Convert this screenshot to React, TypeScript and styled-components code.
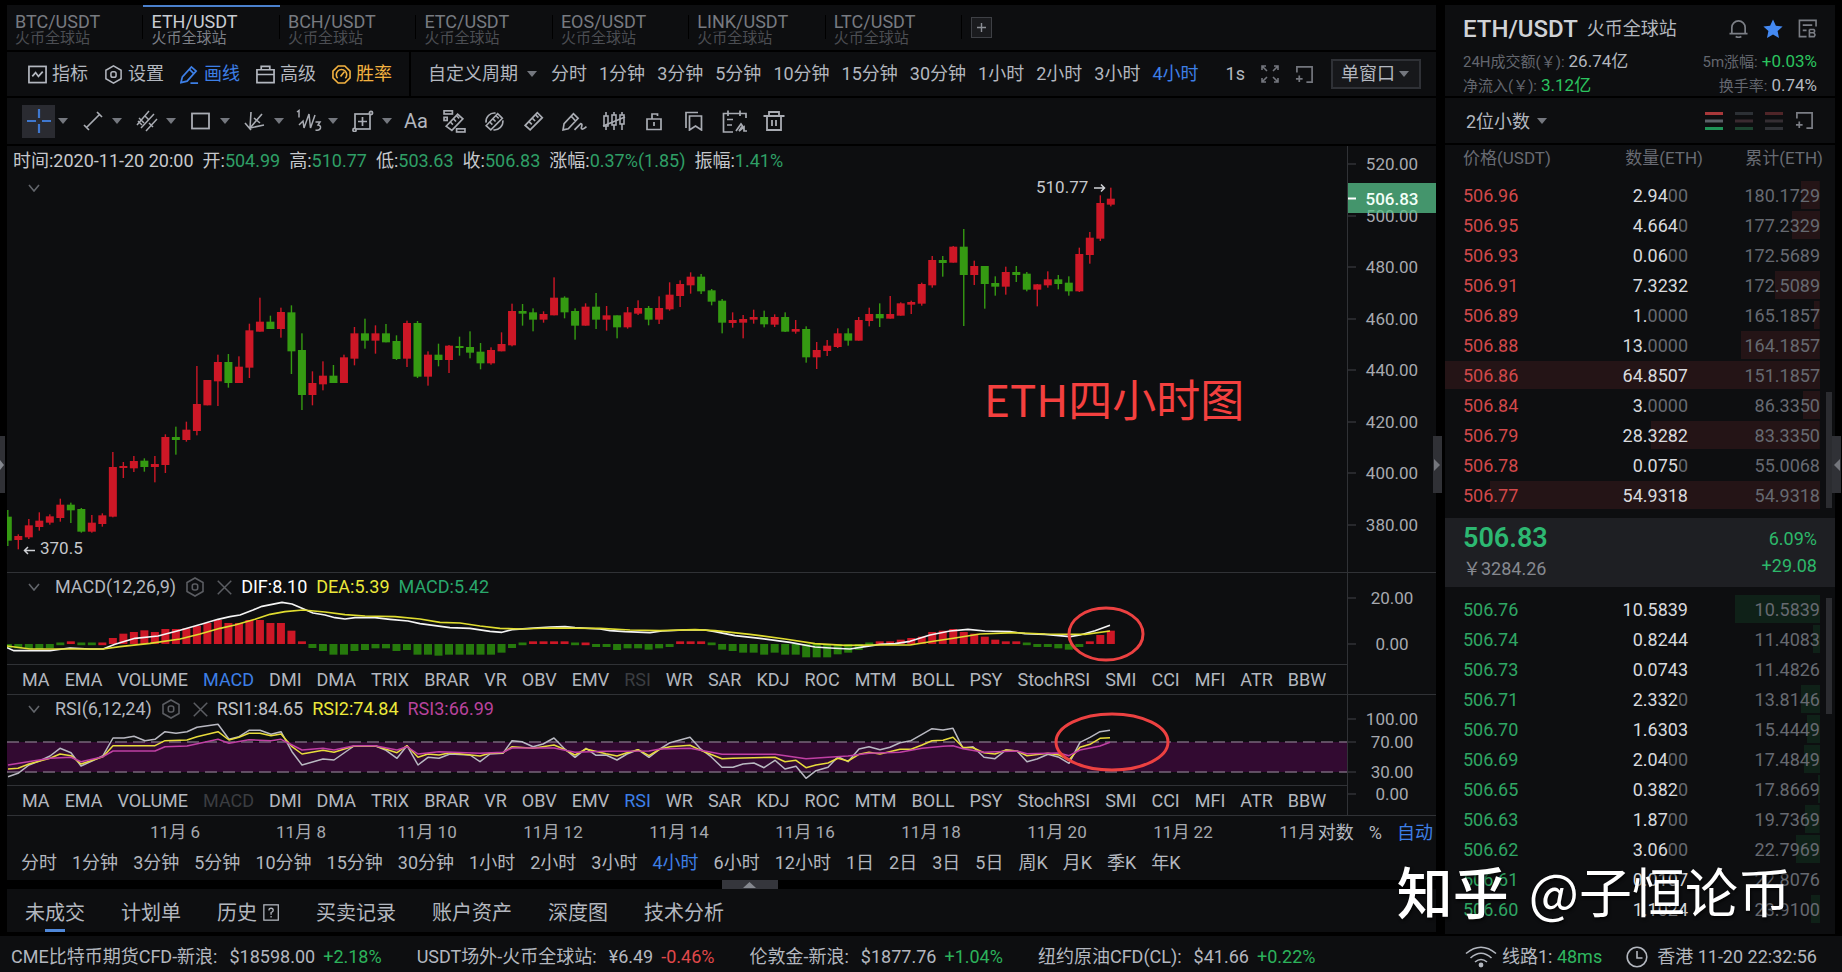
import React from "react";
import styled, { createGlobalStyle } from "styled-components";

const Global = createGlobalStyle`
  * { box-sizing: border-box; }
  body { margin: 0; background: #000; }
  body, button, select { font-family: Roboto, "Noto Sans CJK SC", sans-serif; font-size: 18px; line-height: 24px; color: #b3b7bf; }
  button { background: none; border: 0; padding: 0; cursor: pointer; white-space: nowrap; }
`;

const PANEL = "#0d0e10";
const LINE = "#303236";
const RED = "#cd1726";
const GREEN = "#359a12";
const BLUE = "#3d7fe6";

/* ---------- page frame ---------- */

const Page = styled.div`
  position: relative;
  min-height: 100vh;
  display: flex;
  flex-direction: column;
  padding-top: 5px;
  overflow: hidden;
`;
const Workspace = styled.div`
  flex: 1;
  display: grid;
  grid-template-columns: minmax(0, 1fr) 390px;
  gap: 9px;
  padding: 0 7px 2px;
`;
const Column = styled.div`
  display: flex;
  flex-direction: column;
  min-width: 0;
  gap: 2px;
`;

/* ---------- pair tabs ---------- */

const PairTabs = styled.nav`
  display: flex;
  height: 45px;
  background: ${PANEL};
`;
const PairTab = styled.button<{ $on?: boolean }>`
  flex: 0 0 9.55%;
  display: flex;
  flex-direction: column;
  align-items: flex-start;
  padding: 6px 0 0 8px;
  border-top: 2px solid ${(p) => (p.$on ? "#4a80cc" : "transparent")};
  color: ${(p) => (p.$on ? "#c9ccd2" : "#777a80")};
  background: linear-gradient(#000, #000) right 8px / 1px 24px no-repeat;
  line-height: 18px;
`;
const PairName = styled.span`
  display: block;
`;
const PairVenue = styled.span<{ $on?: boolean }>`
  display: block;
  font-size: 15px;
  line-height: 14px;
  color: ${(p) => (p.$on ? "#7c7f86" : "#4b4d52")};
`;
const AddTab = styled.button`
  width: 21px;
  height: 21px;
  margin: 12px 0 0 9px;
  border: 1px solid #3e4045;
  background: #1a1b1e;
  color: #8b8e95;
  display: grid;
  place-items: center;
`;

/* ---------- tool bars ---------- */

const Bar = styled.div<{ $h: number }>`
  display: flex;
  align-items: center;
  height: ${(p) => p.$h}px;
  background: ${PANEL};
`;
const MainActions = styled.div`
  display: flex;
  align-items: center;
  align-self: stretch;
  gap: 16px;
  padding: 0 17px 0 21px;
  border-right: 2px solid #000;
`;
const Action = styled.button<{ $c?: string }>`
  display: flex;
  align-items: center;
  gap: 5px;
  color: ${(p) => p.$c || "#b3b7bf"};
`;
const Periods = styled.div<{ $gap: number }>`
  display: flex;
  gap: ${(p) => p.$gap}px;
`;
const TextButton = styled.button<{ $on?: boolean; $off?: boolean }>`
  color: ${(p) => (p.$on ? BLUE : p.$off ? "#3b3d41" : "#b3b7bf")};
`;
const Picker = styled.label`
  display: flex;
  align-items: center;
  gap: 9px;
`;
const BareSelect = styled.select`
  appearance: none;
  background: transparent;
  border: 0;
  padding: 0;
  outline: 0;
`;
const PeriodPicker = styled(Picker)`
  margin: 0 14px 0 17px;
`;
const BarEnd = styled.div`
  margin-left: auto;
  display: flex;
  align-items: center;
  gap: 15px;
  padding-right: 15px;
  color: #73767d;
`;
const Refresh = styled.button``;
const WindowPicker = styled(Picker)`
  height: 30px;
  padding: 0 10px 0 8px;
  gap: 4px;
  border: 2px solid #2f3136;
  background: #17181b;
  margin-left: 2px;
`;
const DrawTools = styled.div`
  display: flex;
  align-items: center;
  padding-left: 15px;
`;
const DrawTool = styled.div`
  display: flex;
  align-items: center;
  width: 54px;
`;
const ToolIcon = styled.button<{ $on?: boolean }>`
  width: 33px;
  height: 33px;
  display: grid;
  place-items: center;
  color: ${(p) => (p.$on ? "#3f78cf" : "#a9acb3")};
  background: ${(p) => (p.$on ? "#2a2b31" : "none")};
`;
const ToolMore = styled.button`
  width: 15px;
  display: grid;
  place-items: center;
`;
const SingleTools = styled.div`
  display: flex;
  gap: 7px;
  margin-left: 10px;
`;
const TextTool = styled.button`
  font-size: 20px;
  margin-left: 4px;
`;

/* ---------- chart ---------- */

const ChartPanel = styled.section`
  flex: 1;
  background: ${PANEL};
`;
const Section = styled.div`
  display: grid;
  grid-template-columns: minmax(0, 1fr) 89px;
  border-bottom: 1px solid ${LINE};
`;
const Plot = styled.div`
  position: relative;
`;
const Canvas = styled.svg`
  display: block;
  width: 100%;
`;
const AxisCell = styled.div`
  border-left: 1px solid ${LINE};
`;
const Legend = styled.div<{ $left: number; $top: number }>`
  position: absolute;
  left: ${(p) => p.$left}px;
  top: ${(p) => p.$top}px;
  display: flex;
  align-items: center;
  gap: 9px;
  white-space: nowrap;
`;
const LegendTools = styled.span`
  display: flex;
  align-items: center;
  gap: 12px;
  color: #5b5d62;
`;
const Tint = styled.span<{ $c: string }>`
  color: ${(p) => p.$c};
`;
const Collapse = styled.button<{ $top: number }>`
  position: absolute;
  left: 20px;
  top: ${(p) => p.$top}px;
  width: 14px;
  height: 14px;
  display: grid;
  place-items: center;
`;
const IndicatorBar = styled.div`
  display: flex;
  align-items: center;
  gap: 15px;
  height: 30px;
  padding-left: 15px;
  border-top: 1px solid ${LINE};
  overflow: hidden;
`;
const TimeRow = styled.div`
  position: relative;
  height: 31px;
`;
const ScaleModes = styled.div`
  position: absolute;
  right: 3px;
  top: 5px;
  display: flex;
  gap: 15px;
`;
const ScaleLog = styled.button`
  background: ${PANEL};
`;
const BottomPeriods = styled.div`
  display: flex;
  gap: 15px;
  padding: 4px 0 5px 14px;
`;

/* ---------- account tabs ---------- */

const Splitter = styled.div`
  display: flex;
  justify-content: center;
  height: 9px;
  margin: -2px 0;
`;
const SplitHandle = styled.button`
  width: 56px;
  margin-left: 56px;
  background: #35363c;
  display: grid;
  place-items: center;
  height: 9px;
`;
const AccountTabs = styled.nav`
  display: flex;
  gap: 36px;
  height: 43px;
  margin-bottom: 2px;
  padding-left: 18px;
  background: ${PANEL};
`;
const AccountTab = styled.button<{ $on?: boolean }>`
  display: flex;
  align-items: center;
  gap: 6px;
  font-size: 20px;
  padding-top: 4px;
  background: ${(p) => (p.$on ? "linear-gradient(#4f87d8, #4f87d8) center bottom / 20px 3px no-repeat" : "none")};
`;

/* ---------- order book ---------- */

const Summary = styled.header`
  height: 91px;
  padding: 10px 18px 0;
  background: ${PANEL};
`;
const SummaryTop = styled.div`
  display: flex;
  align-items: center;
  gap: 9px;
  height: 28px;
  margin-bottom: 6px;
`;
const Pair = styled.h1`
  margin: 0;
  font-size: 24px;
  font-weight: 500;
  line-height: 28px;
  color: #d0d2d6;
`;
const SummaryIcons = styled.div`
  margin-left: auto;
  display: flex;
  gap: 15px;
  button { display: grid; color: #7b7e85; }
`;
const StatRow = styled.div`
  display: flex;
  justify-content: space-between;
  height: 24px;
  font-size: 17px;
`;
const StatLabel = styled.span`
  font-size: 15px;
  color: #63666e;
  margin-right: 4px;
`;
const DepthBar = styled(Bar)`
  justify-content: space-between;
  padding: 0 21px 0 21px;
`;
const DepthPicker = styled(Picker)`
  gap: 6px;
  padding-top: 2px;
`;
const DepthIcons = styled.div`
  display: flex;
  gap: 12px;
  button { display: grid; color: #7b7e85; }
`;
const Book = styled.section`
  position: relative;
  flex: 1;
  background: ${PANEL};
  padding-bottom: 8px;
`;
const BookTable = styled.table`
  display: block;
  thead, tbody { display: block; }
`;
const HeadRow = styled.tr`
  display: grid;
  grid-template-columns: 1fr 130px 120px;
  height: 35px;
  padding: 1px 12px 0 18px;
  font-size: 17px;
  color: #686b73;
  th { font-weight: 400; padding: 0; text-align: right; }
  th:first-child { text-align: left; }
`;
const BookRow = styled.tr<{ $fill: number; $sell?: boolean }>`
  display: grid;
  grid-template-columns: 1fr 130px 132px;
  height: 30px;
  line-height: 30px;
  margin-right: 15px;
  padding: 1px 0 0 18px;
  background: linear-gradient(
    ${(p) => (p.$sell ? "#241416, #241416" : "#0f2118, #0f2118")}
  ) right 1px / ${(p) => p.$fill}% 28px no-repeat;
  td { padding: 0; text-align: right; color: #666970; }
  td:first-child { text-align: left; color: ${(p) => (p.$sell ? "#d2484a" : "#2fa664")}; }
  td:nth-child(2) b { font-weight: 400; color: #d8dade; }
`;
const LastPrice = styled.div`
  display: flex;
  justify-content: space-between;
  height: 69px;
  margin: 8px 0 7px;
  padding: 6px 18px 0;
  background: #1e1f23;
`;
const LastBlock = styled.div`
  line-height: 27px;
  color: #2db86a;
  text-align: right;
  padding-top: 1px;
`;
const LastMain = styled.div`
  color: #868990;
  line-height: 34px;
`;
const LastBig = styled.div`
  font-size: 27px;
  font-weight: 600;
  line-height: 28px;
  color: #2db872;
`;
const ScrollThumb = styled.div<{ $top: number }>`
  position: absolute;
  right: 3px;
  top: ${(p) => p.$top}px;
  width: 6px;
  height: 116px;
  background: #2b2c30;
`;

/* ---------- status bar ---------- */

const Status = styled.footer`
  display: flex;
  align-items: center;
  height: 36px;
  padding: 6px 25px 0 11px;
  background: ${PANEL};
  white-space: nowrap;
`;
const Quote = styled.span`
  margin-right: 35px;
  display: flex;
  gap: 8px;
`;
const QuoteName = styled.span`
  margin-right: 4px;
`;
const StatusEnd = styled.div`
  margin-left: auto;
  display: flex;
  align-items: center;
  gap: 5px;
`;
const Clock = styled.span`
  display: flex;
  align-items: center;
  gap: 9px;
  margin-left: 19px;
`;

const EdgeHandle = styled.button<{ $side: "left" | "mid" | "right" }>`
  position: absolute;
  top: 436px;
  height: 57px;
  width: ${(p) => (p.$side === "left" ? 5 : 9)}px;
  ${(p) => (p.$side === "left" ? "left: 0;" : p.$side === "mid" ? "right: 400px;" : "right: 1px;")}
  background: #303136;
  display: grid;
  place-items: center;
  overflow: hidden;
`;
const Watermark = styled.div`
  position: absolute;
  right: 51px;
  bottom: 42px;
  display: flex;
  align-items: center;
  gap: 20px;
  color: #fff;
  font-family: "Noto Sans CJK SC", sans-serif;
  font-size: 53px;
  line-height: 80px;
  text-shadow: 1px 2px 3px rgba(0, 0, 0, 0.7);
  pointer-events: none;
`;
const WatermarkBrand = styled.span`
  font-size: 56px;
  font-weight: 500;
`;

/* ---------- icons ---------- */

const Ico = ({ s = 20, w = 2, children, box = 20 }: { s?: number; w?: number; box?: number; children: React.ReactNode }) => (
  <svg width={s} height={s} viewBox={`0 0 ${box} ${box}`} fill="none" stroke="currentColor" strokeWidth={w} aria-hidden="true">
    {children}
  </svg>
);
const Tri = () => (
  <svg width="10" height="7" viewBox="0 0 10 7" aria-hidden="true"><path d="M0 0H10L5 6Z" fill="#74777e" /></svg>
);
const Hex = ({ s = 20 }: { s?: number }) => (
  <Ico s={s} w={1.6}><path d="M10 1L18 5.5V14.5L10 19L2 14.5V5.5Z" /><rect x="7.3" y="7" width="5.4" height="6" rx="2" /></Ico>
);
const Popout = () => (
  <Ico s={19} w={1.8}><path d="M2 8V2H18V18H12M1 14.5H8M4.5 11V18" /></Ico>
);
const Chevron = () => (
  <svg width="12" height="8" viewBox="0 0 12 8" fill="none" stroke="#62656b" strokeWidth="1.6" aria-hidden="true"><path d="M1 1L6 7L11 1" /></svg>
);
const Ruler = () => (
  <><path d="M2 14L13 2.5L17.5 7L6.5 18Z" /><path d="M5.5 10.5L8 13M8.5 7.5L11 10M11.5 4.5L14 7" /></>
);

const toolGroups: [string, React.ReactNode][] = [
  ["十字光标", <Ico s={26} w={2.2} box={26}><path d="M13 1V10M13 16V25M1 13H10M16 13H25" /></Ico>],
  ["线段", <Ico w={1.7}><path d="M3.5 16.5L16.5 3.5M1 14L6 19M14 1L19 6" /></Ico>],
  ["通道线", <Ico s={22} box={22} w={1.5}><path d="M1 15L13 1M5 18L18 4M10 21L21 9M3 8L8 13M9 6L13 10M13 13L17 17M2 11L6 15" /></Ico>],
  ["矩形", <Ico w={1.8}><rect x="1" y="2.5" width="17" height="15" /></Ico>],
  ["扇形线", <Ico s={22} box={22} w={1.6}><path d="M6 18L7 2M6 18L18 4M6 18L20 15M1 13L7 20M10 8L16 13" /></Ico>],
  ["波浪线", <Ico s={26} box={26} w={1.5}><path d="M1 4L3 2.5V9.5M3 17L7 13L8 20L13 6L14.5 20L19 7M19.5 14H24L22 17Q25 17.5 24.5 20Q23.5 23 19.5 22" /></Ico>],
  ["测量框", <Ico s={22} box={22} w={1.7}><rect x="3" y="4" width="15" height="15" /><path d="M10.5 7V16M6 11.5H15" /><circle cx="19" cy="3" r="1.6" fill="#0d0e10" /><circle cx="2.5" cy="20" r="1.6" fill="#0d0e10" /></Ico>],
];
const singles: [string, React.ReactNode][] = [
  ["组合绘图", <Ico s={23} box={22} w={1.6}><rect x="1" y="0.8" width="8" height="3" /><rect x="1" y="7" width="3" height="3" /><path d="M3 15.5L14 4L19 8.5L8.5 19.5Z" /><path d="M7 11.5L9.5 14M10 8.5L12.5 11M13 5.5L15.5 8" /><rect x="13" y="18" width="8" height="3" /></Ico>],
  ["隐藏绘图", <Ico s={21} w={1.5}><Ruler /><path d="M2 11A8 8 0 0 1 11 2M18 9A8.2 8.2 0 0 1 9 18" /></Ico>],
  ["标尺", <Ico s={22} w={1.6}><Ruler /></Ico>],
  ["画笔", <Ico s={25} box={24} w={1.6}><path d="M1 20L2 14L11 4.5L15.5 9L6 19ZM9 7L13 11.5M12 20L18 14Q20 14 18.5 18Q19 21 23.5 17" /></Ico>],
  ["K线叠加", <Ico s={24} box={24} w={1.6}><rect x="2" y="7" width="4" height="10" /><rect x="10" y="6" width="4" height="10" /><rect x="18" y="6" width="4" height="9" /><path d="M4 3V7M4 17V21M12 3V6M12 16V21M20 3V6M20 15V21M1 17L23 8" /></Ico>],
  ["锁定", <Ico w={1.7}><path d="M3 8H17V18.5H3ZM8 8V3H13.5V5M10 11V15" /></Ico>],
  ["书签", <Ico w={1.7}><path d="M2 17V1.5H14M5.5 5H17.5V19L11.5 15L5.5 19Z" /></Ico>],
  ["绘图列表", <Ico s={25} box={25} w={1.7}><path d="M24 9V4.5H1.5V23H11M6 1.5V7M18 1.5V7M5 10.5H11M5 16H10M14 22L19 15L20.5 17L17 22L22 18V22H25" /></Ico>],
  ["删除", <Ico s={22} box={22} w={1.8}><path d="M0.5 6H21.5M6 6V2H16V6M4 6V20H18V6M9 10V16M13 10V16" /></Ico>],
];

/* ---------- chart data ---------- */

// Index step and origin of the time scale, in pixels.
const STEP = 10.505;
const ORIGIN = 0.8;
const cx = (i: number) => ORIGIN + i * STEP;

// High, open/close top, open/close bottom, low: in thirds of a pixel under y = 104.
// A leading "r" is a rising candle and "g" a falling one.
const candles = `g780 800 872 888,r853 858 870 898,r807 826 862 867,r787 812 831 842,r793 799 818 824,r746 764 804 815,g758 764 781 819,g774 777 845 848,r795 818 845 848,r790 796 822 830,r606 651 800 802,r636 648 654 684,r618 633 655 666,g625 632 651 665,r618 642 651 697,r553 561 645 669,g530 561 570 614,r515 539 570 575,r348 462 543 556,r390 390 466 466,r314 336 394 468,g312 336 399 413,r319 350 399 399,r221 241 353 384,r143 215 245 245,g197 215 237 237,r173 186 237 263,g166 187 304 372,g250 300 435 480,r364 399 435 466,r334 377 403 421,g345 377 399 399,r314 322 399 399,r231 250 326 346,g206 250 272 296,r226 250 272 311,g222 250 277 277,g256 273 327 330,r212 219 326 351,g213 219 380 384,r304 314 380 407,g281 314 330 349,r285 287 330 369,g260 288 294 317,g244 291 308 325,g279 305 340 358,r292 300 340 344,r247 282 304 304,r161 183 286 289,g162 183 191 227,g175 187 209 244,r184 192 209 218,r82 143 196 196,g139 143 187 205,g175 183 227 269,r160 170 227 227,g129 170 209 237,r168 196 209 242,g196 196 232 265,r171 187 232 236,r151 174 191 195,g168 174 209 226,r139 174 209 222,r97 134 178 182,r91 102 138 171,r67 80 106 131,g72 80 124 132,g117 121 155 166,g147 152 218 250,r187 210 219 233,r195 207 218 265,r179 201 209 221,g182 201 223 232,r193 201 224 231,g187 201 245 246,r210 237 245 251,g229 237 322 338,r276 300 322 357,r270 287 303 318,r235 250 291 294,g235 250 272 287,r201 210 272 272,r173 192 213 229,g160 192 205 231,r138 192 206 206,r157 160 197 197,r152 156 164 192,r98 102 161 167,r18 30 106 113,g18 30 39 80,r-12 -10 38 38,g-63 -10 75 228,r32 48 75 105,g48 48 102 176,g79 99 110 137,r50 66 110 134,g48 66 75 96,g66 71 119 124,r102 103 119 169,r64 88 106 113,g75 88 102 118,g79 98 124 137,r-7 12 124 126,r-54 -37 15 41,r-164 -141 -34 -27,r-187 -154 -136 -131`
  .split(",")
  .map((c) => ({ up: c[0] === "r", v: c.slice(1).split(" ").map((n) => 104 + Number(n) / 3) }));

// Histogram values, in thirds of a pixel from the zero line.
const histogram = [
  -12, -13, -15, -15, -12, -5, 8, -5, -5, 5, 18, 31, 36, 41, 36, 45, 45, 47, 54, 63, 72, 63, 63, 72, 72, 63, 63, 40, 8,
  -12, -21, -32, -32, -21, -18, -13, -13, -21, -18, -32, -32, -35, -32, -32, -32, -32, -32, -26, -12, -5, 8, 8, 8, 8, -5,
  5, -9, -9, -18, -13, -13, -17, -13, -9, 8, 8, 8, -5, -17, -21, -26, -26, -32, -26, -32, -32, -40, -40, -40, -31, -26,
  -18, -5, 8, 8, 13, 18, 22, 36, 40, 45, 36, 31, 22, 13, 8, 8, -5, -9, -9, -13, -17, -9, 8, 27, 40,
];

const dif = "7,248 14,257 50,257 70,249 90,252 103,252 115,238 135,220 158,213 180,196 202,177 218,163 230,155 240,150 253,135 262,124 282,112 292,117 302,130 313,144 325,150 335,158 345,162 355,158 375,158 390,163 408,168 420,176 450,188 470,190 490,199 502,202 512,194 530,190 550,186 565,185 575,188 600,192 610,197 625,200 650,203 662,198 685,195 705,195 715,200 735,212 760,220 790,232 815,246 830,249 850,252 865,245 880,238 895,236 910,229 930,210 950,198 968,193 985,198 1010,200 1025,206 1045,208 1070,215 1080,210 1095,197 1110,181";
const dea = "7,243 30,252 103,252 120,245 150,235 180,222 200,207 220,190 235,180 255,163 270,148 285,140 303,135 325,141 345,149 365,153 395,155 420,162 440,172 460,174 480,183 500,190 520,192 550,189 600,190 630,195 660,197 695,194 715,197 750,208 785,222 815,236 845,241 875,240 910,240 935,228 955,219 980,207 1015,203 1045,207 1085,208 1110,198";
const rsi1 = "8,635 18,625 29,600 40,587 50,573 60,550 71,563 81,603 92,588 103,572 113,519 124,519 134,514 145,527 155,523 165,500 176,505 187,500 197,487 218,478 229,523 239,515 249,496 260,496 271,508 281,500 292,560 302,600 323,582 334,585 354,543 375,542 386,556 397,580 407,542 418,600 428,577 439,580 450,567 470,570 480,590 490,567 503,565 512,527 522,530 533,545 543,537 554,519 564,550 575,577 586,550 596,571 606,570 617,585 627,567 638,554 649,577 660,552 670,533 690,517 700,550 711,575 722,607 733,607 743,597 754,594 764,608 775,586 785,612 796,604 806,640 816,617 828,607 838,575 848,590 859,552 869,545 880,554 890,547 900,533 911,527 922,508 932,491 943,495 953,490 963,550 973,545 984,577 995,581 1006,555 1017,558 1027,590 1037,582 1048,568 1059,577 1069,595 1080,532 1090,517 1100,500 1110,496";
const rsi2 = "8,612 18,610 29,597 50,580 60,567 71,572 81,597 103,575 113,542 155,542 165,527 187,525 197,515 218,500 229,525 239,517 249,505 260,505 271,512 281,507 292,545 302,567 323,556 334,562 354,543 375,542 397,563 407,542 418,577 428,567 439,570 450,563 480,573 490,565 503,563 512,545 533,550 554,540 564,553 575,570 586,552 606,566 617,573 627,563 638,554 649,572 660,552 670,545 690,541 700,555 722,581 733,580 775,577 785,590 796,586 806,608 816,600 828,594 838,580 848,588 859,568 869,562 880,567 900,553 911,553 922,540 932,527 943,526 953,517 963,547 973,548 984,563 995,567 1006,555 1017,558 1027,572 1048,565 1059,570 1069,585 1080,547 1090,538 1100,520 1110,518";
const rsi3 = "8,600 50,580 71,577 81,590 103,575 113,558 155,558 165,545 187,543 218,523 229,535 249,524 271,527 281,523 302,555 323,550 334,555 354,542 375,542 397,555 407,545 418,567 439,560 480,565 503,562 512,549 554,549 575,562 606,559 649,558 660,552 690,550 722,568 775,568 806,581 828,577 848,573 869,565 900,562 922,550 943,544 953,542 963,551 984,562 1017,558 1027,566 1059,564 1069,572 1080,555 1100,543 1110,532";

// Turns "x,y" pairs on the data grid into plot coordinates.
const trace = (pts: string, top: number) =>
  pts.split(" ").map((p) => { const [x, y] = p.split(",").map(Number); return `${x - 7},${(y / 3 - top).toFixed(1)}`; }).join(" ");

const indicators = "MA EMA VOLUME MACD DMI DMA TRIX BRAR VR OBV EMV RSI WR SAR KDJ ROC MTM BOLL PSY StochRSI SMI CCI MFI ATR BBW".split(" ");
const pairs = ["BTC", "ETH", "BCH", "ETC", "EOS", "LINK", "LTC"];
const periods = ["分时", "1分钟", "3分钟", "5分钟", "10分钟", "15分钟", "30分钟", "1小时", "2小时", "3小时", "4小时"];
const morePeriods = [...periods, "6小时", "12小时", "1日", "2日", "3日", "5日", "周K", "月K", "季K", "年K"];

type Level = [string, string, string, string, number];
const asks: Level[] = [
  ["506.96", "2.94", "00", "180.1729", 5], ["506.95", "4.664", "0", "177.2329", 7.5], ["506.93", "0.06", "00", "172.5689", 0],
  ["506.91", "7.3232", "", "172.5089", 12], ["506.89", "1.", "0000", "165.1857", 1.5], ["506.88", "13.", "0000", "164.1857", 21],
  ["506.86", "64.8507", "", "151.1857", 100], ["506.84", "3.", "0000", "86.3350", 4.6], ["506.79", "28.3282", "", "83.3350", 45],
  ["506.78", "0.075", "0", "55.0068", 0], ["506.77", "54.9318", "", "54.9318", 88],
];
const bids: Level[] = [
  ["506.76", "10.5839", "", "10.5839", 22.7], ["506.74", "0.8244", "", "11.4083", 1.9], ["506.73", "0.0743", "", "11.4826", 0],
  ["506.71", "2.332", "0", "13.8146", 5.1], ["506.70", "1.6303", "", "15.4449", 3.6], ["506.69", "2.04", "00", "17.4849", 4.3],
  ["506.65", "0.382", "0", "17.8669", 0.6], ["506.63", "1.87", "00", "19.7369", 3.9], ["506.62", "3.06", "00", "22.7969", 6.5],
  ["506.61", "0.0107", "", "22.8076", 0], ["506.60", "1.1024", "", "23.9100", 2.4],
];

const AxisLabel = ({ y, text }: { y: number; text: string }) => (
  <>
    <path d={`M0 ${y}H8`} stroke={LINE} strokeWidth="1.5" />
    <text x="44" y={y + 6} textAnchor="middle" fill="#a6a9af" fontSize="17">{text}</text>
  </>
);
const Indicators = ({ on, off }: { on: string; off: string }) => (
  <IndicatorBar>
    {indicators.map((n) => <TextButton key={n} $on={n === on} $off={n === off}>{n}</TextButton>)}
  </IndicatorBar>
);
const Levels = ({ rows, sell }: { rows: Level[]; sell?: boolean }) => (
  <tbody>
    {rows.map(([price, qty, zeros, total, fill]) => (
      <BookRow key={price} $fill={fill} $sell={sell}>
        <td>{price}</td><td><b>{qty}</b>{zeros}</td><td>{total}</td>
      </BookRow>
    ))}
  </tbody>
);
const DepthIcon = ({ c }: { c: string[] }) => (
  <svg width="18" height="20" viewBox="0 0 18 20" aria-hidden="true">
    {c.map((col, i) => <rect key={i} y={1 + i * 7.5} width="18" height="3" fill={col} />)}
  </svg>
);

export default function App() {
  return (
    <Page>
      <Global />
      <Workspace>
        <Column>
          <PairTabs>
            {pairs.map((p) => (
              <PairTab key={p} $on={p === "ETH"}>
                <PairName>{p}/USDT</PairName>
                <PairVenue $on={p === "ETH"}>火币全球站</PairVenue>
              </PairTab>
            ))}
            <AddTab aria-label="添加"><Ico s={9} box={9} w={1.4}><path d="M4.5 0V9M0 4.5H9" /></Ico></AddTab>
          </PairTabs>

          <Bar $h={44}>
            <MainActions>
              <Action><Ico s={19} w={1.8}><rect x="1" y="1.5" width="18" height="17" /><path d="M4.5 12L8 8L11 12L15.5 7" /></Ico>指标</Action>
              <Action><Hex s={19} />设置</Action>
              <Action $c={BLUE}><Ico s={19} w={1.8}><path d="M1 18.5L2.5 12.5L12 2L17 6.5L7.5 17ZM10 4.5L14.5 9M11 19H19" /></Ico>画线</Action>
              <Action><Ico s={19} w={1.8}><path d="M1 5H19V18.5H1ZM1 10H19M5.5 5V1.5H14.5V5" /></Ico>高级</Action>
              <Action $c="#f3b240"><Ico s={19} w={1.7}><path d="M6.5 1H13.5L19 6.5V13.5L13.5 19H6.5L1 13.5V6.5Z" /><path d="M6 14A5.5 5.5 0 1 1 14 14" /><path d="M9 12L13 7" /></Ico>胜率</Action>
            </MainActions>
            <PeriodPicker>
              <BareSelect aria-label="自定义周期"><option>自定义周期</option></BareSelect>
              <Tri />
            </PeriodPicker>
            <Periods $gap={12}>
              {periods.map((p) => <TextButton key={p} $on={p === "4小时"}>{p}</TextButton>)}
            </Periods>
            <BarEnd>
              <Refresh>1s</Refresh>
              <Ico s={20} w={1.6}><path d="M2 6V2H6M2 2L7 7M14 2H18V6M18 2L13 7M2 14V18H6M2 18L7 13M14 18H18V14M18 18L13 13" /></Ico>
              <Popout />
              <WindowPicker>
                <BareSelect aria-label="窗口"><option>单窗口</option></BareSelect>
                <Tri />
              </WindowPicker>
            </BarEnd>
          </Bar>

          <Bar $h={46}>
            <DrawTools>
              {toolGroups.map(([name, icon], i) => (
                <DrawTool key={name}>
                  <ToolIcon $on={i === 0} aria-label={name}>{icon}</ToolIcon>
                  <ToolMore aria-label={name + "选项"}><Tri /></ToolMore>
                </DrawTool>
              ))}
              <TextTool>Aa</TextTool>
              <SingleTools>
                {singles.map(([name, icon]) => <ToolIcon key={name} aria-label={name}>{icon}</ToolIcon>)}
              </SingleTools>
            </DrawTools>
          </Bar>

          <ChartPanel>
            <Section>
              <Plot>
                <Canvas height="426">
                  {candles.map(({ up, v }, i) => (
                    <g key={i} fill={up ? RED : GREEN}>
                      <rect x={cx(i) - 0.7} y={v[0]} width="1.4" height={v[3] - v[0]} />
                      <rect x={cx(i) - 4} y={v[1]} width="8" height={v[2] - v[1]} />
                    </g>
                  ))}
                  <g stroke="#d0d2d6" strokeWidth="1.5" fill="none">
                    <path d="M28 404.5H17.5M21 401L17.5 404.5L21 408" />
                    <path d="M1087 42H1097.5M1094 38.5L1097.5 42L1094 45.5" />
                  </g>
                  <g fill="#c6c8cc" fontSize="17">
                    <text x="33" y="408">370.5</text>
                    <text x="1029" y="47">510.77</text>
                  </g>
                  <text x="977" y="271" fill="#f4403f" fontSize="44" fontFamily="Noto Sans CJK SC, sans-serif">ETH四小时图</text>
                </Canvas>
                <Legend $left={6} $top={3}>
                  <Tint $c="#c6c8cc">时间:2020-11-20 20:00</Tint>
                  {[["开", "504.99"], ["高", "510.77"], ["低", "503.63"], ["收", "506.83"], ["涨幅", "0.37%(1.85)"], ["振幅", "1.41%"]].map(([k, v]) => (
                    <Tint key={k} $c="#c6c8cc">{k}:<Tint $c="#2f9f66">{v}</Tint></Tint>
                  ))}
                </Legend>
                <Collapse $top={35} aria-label="收起"><Chevron /></Collapse>
              </Plot>
              <AxisCell>
                <Canvas height="426">
                  {[520, 500, 480, 460, 440, 420, 400, 380].map((p, i) => (
                    <AxisLabel key={p} y={Math.round(18 + i * 51.5)} text={p + ".00"} />
                  ))}
                  <rect y="37" width="89" height="30" fill="#57c38b" opacity="0.75" />
                  <path d="M0 52.5H8" stroke="#fff" strokeWidth="2" />
                  <text x="44" y="59" textAnchor="middle" fill="#f2fff8" fontSize="17" fontWeight="500">506.83</text>
                </Canvas>
              </AxisCell>
            </Section>

            <Section>
              <div>
                <Plot>
                  <Canvas height="91">
                    {histogram.map((v, i) => (
                      <rect
                        key={i}
                        x={cx(i) - 4}
                        y={Math.abs(v) === 5 ? 69.5 : v > 0 ? 71 - v / 3 : 71}
                        width="8"
                        height={Math.max(Math.abs(v) / 3, 2.7)}
                        fill={v > 0 ? RED : "#267a0c"}
                      />
                    ))}
                    <g fill="none" strokeWidth="1.7" strokeLinejoin="round">
                      <polyline points={trace(dif, 8)} stroke="#f4f4f4" />
                      <polyline points={trace(dea, 8)} stroke="#dfdc30" />
                      <ellipse cx="1099" cy="61" rx="37" ry="26" stroke="#ec4141" strokeWidth="3" />
                    </g>
                  </Canvas>
                  <Collapse $top={7} aria-label="收起"><Chevron /></Collapse>
                  <Legend $left={48} $top={2}>
                    MACD(12,26,9)
                    <LegendTools><Hex /><Ico s={15}><path d="M1 1L19 19M19 1L1 19" /></Ico></LegendTools>
                    <Tint $c="#fff">DIF:8.10</Tint>
                    <Tint $c="#ebe83a">DEA:5.39</Tint>
                    <Tint $c="#2aa76c">MACD:5.42</Tint>
                  </Legend>
                </Plot>
                <Indicators on="MACD" off="RSI" />
              </div>
              <AxisCell>
                <Canvas height="121">
                  <AxisLabel y={25} text="20.00" />
                  <AxisLabel y={71} text="0.00" />
                </Canvas>
              </AxisCell>
            </Section>

            <Section>
              <div>
                <Plot>
                  <Canvas height="90">
                    <rect y="47" width="100%" height="30" fill="#320a31" />
                    <g stroke="#77657a" strokeWidth="1.5" strokeDasharray="12 6">
                      <line x1="0" x2="100%" y1="47" y2="47" />
                      <line x1="0" x2="100%" y1="77" y2="77" />
                    </g>
                    <g fill="none" strokeWidth="1.5" strokeLinejoin="round">
                      <polyline points={trace(rsi1, 130)} stroke="#b9b9c2" />
                      <polyline points={trace(rsi2, 130)} stroke="#e8dc3c" />
                      <polyline points={trace(rsi3, 130)} stroke="#c040a4" />
                      <ellipse cx="1105" cy="47" rx="56" ry="28" stroke="#ec4141" strokeWidth="3" />
                    </g>
                  </Canvas>
                  <Collapse $top={7} aria-label="收起"><Chevron /></Collapse>
                  <Legend $left={48} $top={2}>
                    RSI(6,12,24)
                    <LegendTools><Hex /><Ico s={15}><path d="M1 1L19 19M19 1L1 19" /></Ico></LegendTools>
                    <Tint $c="#c0c2c7">RSI1:84.65</Tint>
                    <Tint $c="#ebe83a">RSI2:74.84</Tint>
                    <Tint $c="#b8439d">RSI3:66.99</Tint>
                  </Legend>
                </Plot>
                <Indicators on="RSI" off="MACD" />
              </div>
              <AxisCell>
                <Canvas height="120">
                  <AxisLabel y={24} text="100.00" />
                  <AxisLabel y={47} text="70.00" />
                  <AxisLabel y={77} text="30.00" />
                  <AxisLabel y={99} text="0.00" />
                </Canvas>
              </AxisCell>
            </Section>

            <TimeRow>
              <Canvas height="30" fontSize="17" fill="#a6a9af" textAnchor="middle">
                {[6, 8, 10, 12, 14, 16, 18, 20, 22, 24].map((d, i) => (
                  <text key={d} x={168 + i * 126} y="22">11月 {d}</text>
                ))}
              </Canvas>
              <ScaleModes>
                <ScaleLog>对数</ScaleLog>
                <TextButton>%</TextButton>
                <TextButton $on>自动</TextButton>
              </ScaleModes>
            </TimeRow>
            <BottomPeriods>
              {morePeriods.map((p) => <TextButton key={p} $on={p === "4小时"}>{p}</TextButton>)}
            </BottomPeriods>
          </ChartPanel>

          <Splitter>
            <SplitHandle aria-label="展开">
              <svg width="13" height="6" viewBox="0 0 13 6" aria-hidden="true"><path d="M6.5 0L13 6H0Z" fill="#85888f" /></svg>
            </SplitHandle>
          </Splitter>

          <AccountTabs>
            <AccountTab $on>未成交</AccountTab>
            <AccountTab>计划单</AccountTab>
            <AccountTab>
              历史
              <Ico s={17} w={1.5}><rect x="1" y="1" width="17" height="18" /><path d="M7 7.5Q7 5 9.5 5Q12 5 12 7.5Q12 9 9.5 10V12.5M9.5 14V16" /></Ico>
            </AccountTab>
            {["买卖记录", "账户资产", "深度图", "技术分析"].map((t) => <AccountTab key={t}>{t}</AccountTab>)}
          </AccountTabs>
        </Column>

        <Column>
          <Summary>
            <SummaryTop>
              <Pair>ETH/USDT</Pair>
              <span>火币全球站</span>
              <SummaryIcons>
                <button aria-label="提醒"><Ico s={19} w={1.8}><path d="M0.5 15.5H19.5M3 15.5V9A7 7 0 0 1 17 9V15.5M7 18.5Q10 20 13 18.5" /></Ico></button>
                <button aria-label="收藏">
                  <svg width="20" height="20" viewBox="0 0 20 20" aria-hidden="true"><path d="M10 0.5L12.9 6.7L19.6 7.5L14.6 12.1L16 19L10 15.6L4 19L5.4 12.1L0.4 7.5L7.1 6.7Z" fill="#4489f2" /></svg>
                </button>
                <button aria-label="资料"><Ico s={19} w={1.7}><path d="M19 8V1.5H1.5V18.5H9M5 6.5H15M5 12H9M12 11H16.5Q18.5 12.5 16.5 14.5H12M16.5 14.5Q19 16.5 17 18.5H12V11" /></Ico></button>
              </SummaryIcons>
            </SummaryTop>
            <StatRow>
              <span><StatLabel>24H成交额(￥):</StatLabel>26.74亿</span>
              <span><StatLabel>5m涨幅:</StatLabel><Tint $c="#2bc45f">+0.03%</Tint></span>
            </StatRow>
            <StatRow>
              <span><StatLabel>净流入(￥):</StatLabel><Tint $c="#2bc45f">3.12亿</Tint></span>
              <span><StatLabel>换手率:</StatLabel>0.74%</span>
            </StatRow>
          </Summary>

          <DepthBar $h={45}>
            <DepthPicker>
              <BareSelect aria-label="小数位数"><option>2位小数</option></BareSelect>
              <Tri />
            </DepthPicker>
            <DepthIcons>
              <button aria-label="买卖盘"><DepthIcon c={["#a8383a", "#5b6068", "#1f9458"]} /></button>
              <button aria-label="买盘"><DepthIcon c={["#2c3035", "#3b2a30", "#1d4430"]} /></button>
              <button aria-label="卖盘"><DepthIcon c={["#4f2528", "#352e33", "#303237"]} /></button>
              <button aria-label="弹出"><Popout /></button>
            </DepthIcons>
          </DepthBar>

          <Book>
            <BookTable cellSpacing={0}>
              <thead>
                <HeadRow><th>价格(USDT)</th><th>数量(ETH)</th><th>累计(ETH)</th></HeadRow>
              </thead>
              <Levels rows={asks} sell />
            </BookTable>
            <LastPrice>
              <LastMain><LastBig>506.83</LastBig>￥3284.26</LastMain>
              <LastBlock>6.09%<br />+29.08</LastBlock>
            </LastPrice>
            <BookTable cellSpacing={0}><Levels rows={bids} /></BookTable>
            <ScrollThumb $top={247} />
            <ScrollThumb $top={453} />
          </Book>
        </Column>
      </Workspace>

      <Status>
        {[["CME比特币期货CFD-新浪:", "$18598.00", "+2.18%"], ["USDT场外-火币全球站:", "¥6.49", "-0.46%"], ["伦敦金-新浪:", "$1877.76", "+1.04%"], ["纽约原油CFD(CL):", "$41.66", "+0.22%"]].map(([n, v, d]) => (
          <Quote key={n}>
            <QuoteName>{n}</QuoteName><span>{v}</span><Tint $c={d[0] === "+" ? "#2cb25b" : "#e0484a"}>{d}</Tint>
          </Quote>
        ))}
        <StatusEnd>
          <svg width="32" height="22" viewBox="0 0 32 22" fill="none" stroke="currentColor" strokeWidth="1.6" aria-hidden="true">
            <path d="M1 7.5Q16 -5 31 7.5M5.5 12Q16 2.5 26.5 12M10 16Q16 11 22 16" /><circle cx="16" cy="19" r="1.6" fill="currentColor" />
          </svg>
          <span>线路1: <Tint $c="#2fb75f">48ms</Tint></span>
          <Clock>
            <Ico s={22} box={22} w={1.6}><circle cx="11" cy="11" r="9.8" /><path d="M11 5V12H16.5" /></Ico>
            香港 11-20 22:32:56
          </Clock>
        </StatusEnd>
      </Status>

      <EdgeHandle $side="left" aria-label="展开左栏"><svg width="5" height="10" viewBox="0 0 5 10" aria-hidden="true"><path d="M0 0L4 5L0 10Z" fill="#85888f" /></svg></EdgeHandle>
      <EdgeHandle $side="mid" aria-label="收起右栏"><svg width="7" height="12" viewBox="0 0 7 12" aria-hidden="true"><path d="M0 0L6 6L0 12Z" fill="#74767c" /></svg></EdgeHandle>
      <EdgeHandle $side="right" aria-label="展开右栏"><svg width="7" height="12" viewBox="0 0 7 12" aria-hidden="true"><path d="M7 0L1 6L7 12Z" fill="#74767c" /></svg></EdgeHandle>
      <Watermark><WatermarkBrand>知乎</WatermarkBrand><span>@子恒论币</span></Watermark>
    </Page>
  );
}
